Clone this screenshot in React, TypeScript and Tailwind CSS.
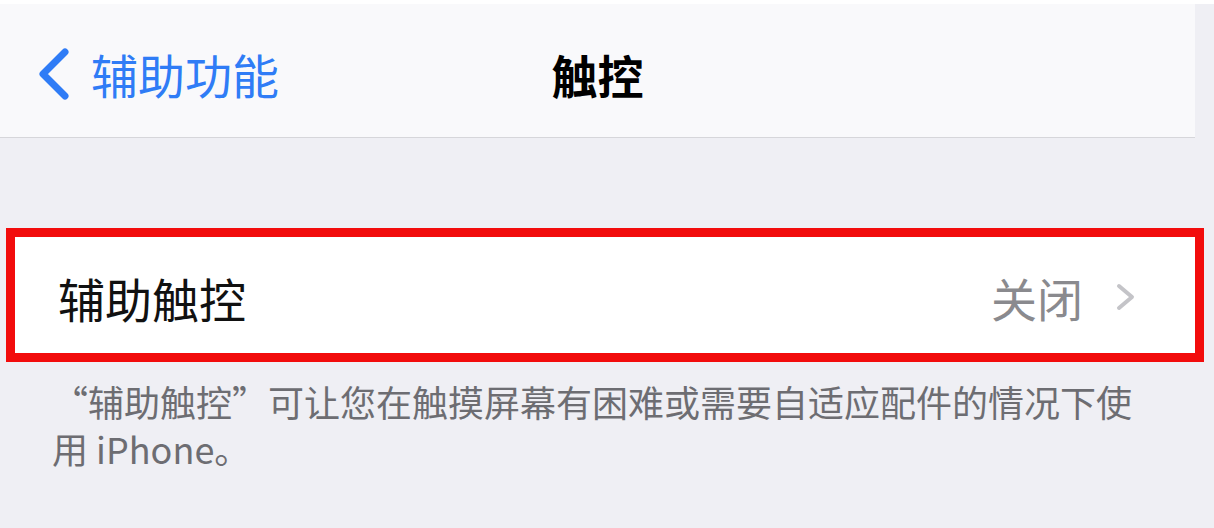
export default function App() {
  return (
    <div className="w-[1214px] h-[528px] overflow-hidden bg-[#efeff4] font-['Noto_Sans_CJK_SC','Noto_Sans',sans-serif]">
      <div className="h-[4px] bg-white" />

      {/* nav bar */}
      <header className="w-[1195px] h-[134px] bg-[#f9f9fb] border-b border-[#d6d6da] grid grid-cols-[1fr_auto_1fr] items-center pt-[6px]">
        <button className="flex items-center gap-[21px] pl-[38px] text-[#2f7cf6]">
          <svg width="32" height="52" viewBox="0 0 32 52" fill="none">
            <polyline points="27,4 5,26 27,48" stroke="currentColor" strokeWidth="7" strokeLinecap="round" strokeLinejoin="round" />
          </svg>
          <span className="text-[47px] leading-none">辅助功能</span>
        </button>
        <h1 className="text-[46px] leading-none font-semibold text-black">触控</h1>
        <div />
      </header>

      <div className="h-[90px]" />

      {/* highlighted row */}
      <div className="ml-[6px] w-[1198px] h-[134px] border-[9px] border-[#f20c0c] bg-white flex items-center justify-between pl-[43px] pr-[59px] pt-[4px]">
        <span className="text-[47px] leading-none text-[#111]">辅助触控</span>
        <div className="flex items-center gap-[33px]">
          <span className="text-[46px] leading-none text-[#8a8a8e]">关闭</span>
          <svg width="20" height="28" viewBox="0 0 20 28" fill="none">
            <polyline points="3,3 16,14 3,25" stroke="#c4c4c8" strokeWidth="4" strokeLinecap="round" strokeLinejoin="round" />
          </svg>
        </div>
      </div>

      <p className="pl-[52px] pt-[16px] w-[1160px] text-[36px] leading-[47px] text-[#6d6d72]">
        “辅助触控”可让您在触摸屏幕有困难或需要自适应配件的情况下使用 iPhone。
      </p>
    </div>
  )
}
